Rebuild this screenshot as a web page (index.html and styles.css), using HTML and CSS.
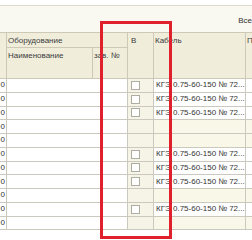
FILE: index.html
```html
<!DOCTYPE html>
<html lang="ru">
<head>
  <meta charset="UTF-8">
  <title>Оборудование</title>
  <link rel="stylesheet" href="styles.css">
</head>
<body>
  <div class="toolbar">
    <span class="totals">Все</span>
  </div>

  <div class="grid">
    <!-- header -->
    <div class="head h-num"></div>
    <div class="head h-group">Оборудование</div>
    <div class="head h-name">Наименование</div>
    <div class="head h-no">зав. №</div>
    <div class="head h-b">В</div>
    <div class="head h-cable">Кабель</div>
    <div class="head h-rest">П</div>

    <!-- rows -->
    <div class="cell num">0</div><div class="cell name"></div><div class="cell no"></div>
    <div class="cell b"><span class="check"></span></div><div class="cell cable">КГЭ 0.75-60-150 № 72...</div><div class="cell rest"></div>

    <div class="cell num">0</div><div class="cell name"></div><div class="cell no"></div>
    <div class="cell b"><span class="check"></span></div><div class="cell cable">КГЭ 0.75-60-150 № 72...</div><div class="cell rest"></div>

    <div class="cell num">0</div><div class="cell name"></div><div class="cell no"></div>
    <div class="cell b"><span class="check"></span></div><div class="cell cable">КГЭ 0.75-60-150 № 72...</div><div class="cell rest"></div>

    <div class="cell num">0</div><div class="cell name"></div><div class="cell no"></div>
    <div class="cell b"></div><div class="cell cable empty"></div><div class="cell rest empty"></div>

    <div class="cell num">0</div><div class="cell name"></div><div class="cell no"></div>
    <div class="cell b"></div><div class="cell cable empty"></div><div class="cell rest empty"></div>

    <div class="cell num">0</div><div class="cell name"></div><div class="cell no"></div>
    <div class="cell b"><span class="check"></span></div><div class="cell cable">КГЭ 0.75-60-150 № 72...</div><div class="cell rest"></div>

    <div class="cell num">0</div><div class="cell name"></div><div class="cell no"></div>
    <div class="cell b"><span class="check"></span></div><div class="cell cable">КГЭ 0.75-60-150 № 72...</div><div class="cell rest"></div>

    <div class="cell num">0</div><div class="cell name"></div><div class="cell no"></div>
    <div class="cell b"><span class="check"></span></div><div class="cell cable">КГЭ 0.75-60-150 № 72...</div><div class="cell rest"></div>

    <div class="cell num">0</div><div class="cell name"></div><div class="cell no"></div>
    <div class="cell b"></div><div class="cell cable empty"></div><div class="cell rest empty"></div>

    <div class="cell num">0</div><div class="cell name"></div><div class="cell no"></div>
    <div class="cell b"><span class="check"></span></div><div class="cell cable">КГЭ 0.75-60-150 № 72...</div><div class="cell rest"></div>

    <div class="cell num">0</div><div class="cell name"></div><div class="cell no"></div>
    <div class="cell b"></div><div class="cell cable empty"></div><div class="cell rest empty"></div>
  </div>

  <!-- red highlight drawn over the table -->
  <div class="mark"></div>
</body>
</html>
```

FILE: styles.css
```css
body {
  margin: 0;
  background: #ffffff;
  font-family: 'Liberation Sans', Arial, sans-serif;
  font-size: 8px;
  color: #333333;
  position: relative;
  width: 252px;
  height: 240px;
  overflow: hidden;
}

.toolbar {
  margin-top: 5px;
  height: 26px;
  border-top: 1px solid #dedccf;
  background: #f9f8f1;
  display: flex;
  align-items: center;
  justify-content: flex-end;
}
.totals {
  white-space: nowrap;
  padding-top: 2px;
}

.grid {
  display: grid;
  grid-template-columns: 7px 86px 35px 26px 92px 6px;
  grid-template-rows: 15px 31px repeat(11, 13.75px);
  border-top: 1px solid #cdc9b6;
  line-height: 10px;
}

.head {
  background: #f0eddb;
  border-bottom: 1px solid #cdc9b6;
  border-right: 1px solid #cdc9b6;
  padding: 3px 1px 0 1px;
  white-space: nowrap;
  overflow: hidden;
  color: #3c3c3c;
}
.h-num   { grid-row: 1 / 3; grid-column: 1; }
.h-group { grid-row: 1; grid-column: 2 / 4; padding-top: 3px; }
.h-name  { grid-row: 2; grid-column: 2; }
.h-no    { grid-row: 2; grid-column: 3; }
.h-b     { grid-row: 1 / 3; grid-column: 4; padding-left: 3px; padding-top: 3px; }
.h-cable { grid-row: 1 / 3; grid-column: 5; padding-top: 3px; }
.h-rest  { grid-row: 1 / 3; grid-column: 6; border-right: none; padding: 3px 0 0 1px; }

.cell {
  border-bottom: 1px solid #cbc9bd;
  background: #ffffff;
  display: flex;
  align-items: center;
  overflow: hidden;
  white-space: nowrap;
}
.num {
  border-right: 1px solid #cbc9bd;
  justify-content: flex-end;
  padding-right: 1px;
}
.no,
.b,
.cable {
  border-right: 1px solid #cbc9bd;
}
.b {
  background: #f6f4e6;
  padding-left: 3px;
}
.cable {
  padding-left: 2px;
}
.empty {
  background: #f9f7e8;
}

.check {
  width: 9px;
  height: 9px;
  box-sizing: border-box;
  border: 1px solid #aeada2;
  background: #ffffff;
}

.mark {
  position: absolute;
  left: 100px;
  top: 21px;
  width: 72px;
  height: 218px;
  box-sizing: border-box;
  border: 3px solid #e0202c;
}
```
